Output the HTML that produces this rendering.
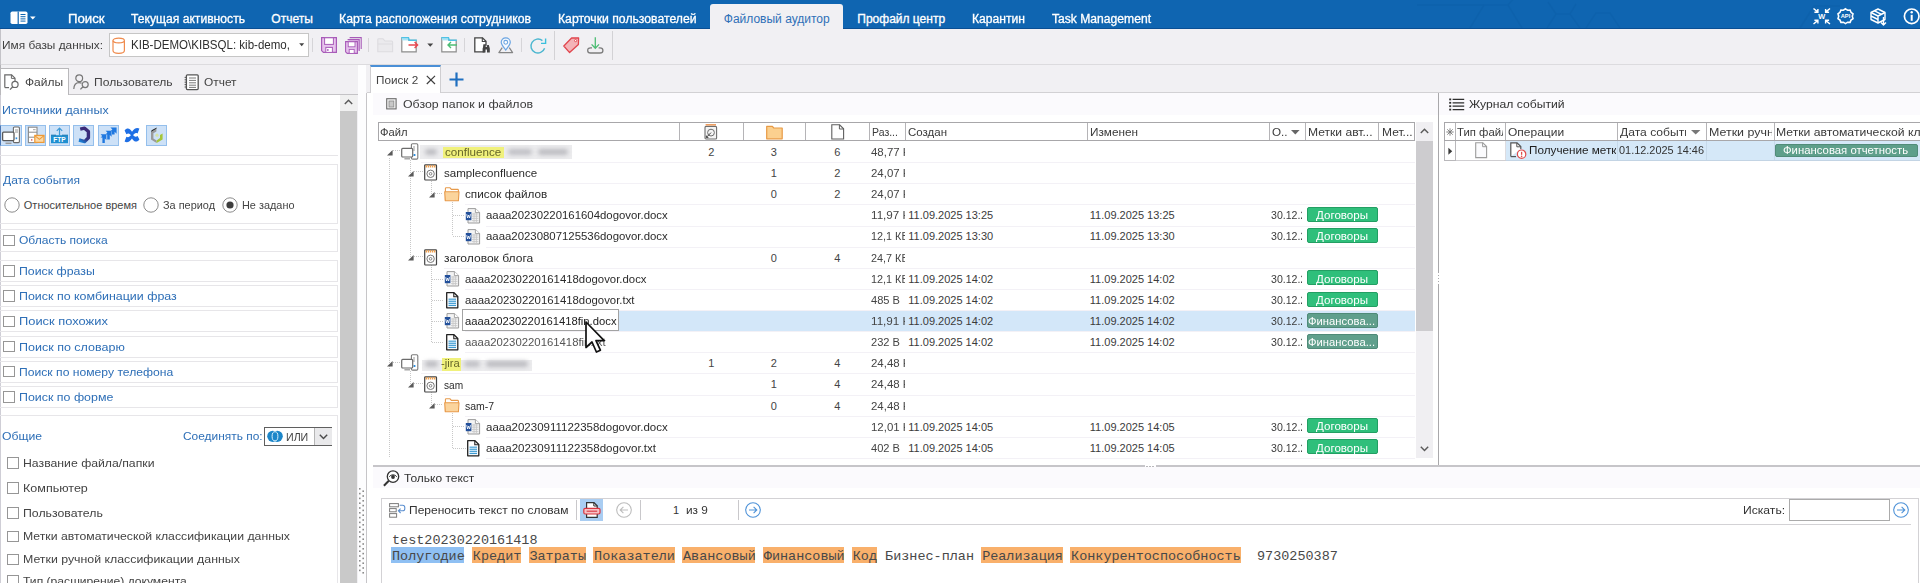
<!DOCTYPE html>
<html lang="ru"><head><meta charset="utf-8"><title>File Auditor</title><style>
html,body{margin:0;padding:0;}
body{width:1920px;height:583px;overflow:hidden;background:#f1f0f3;font-family:"Liberation Sans",sans-serif;position:relative;}
.a{position:absolute;}
.t{white-space:pre;transform-origin:0 0;}
svg{overflow:visible;}
</style></head>
<body>
<div class="a" style="left:0px;top:0px;width:1920px;height:28.5px;background:#0f65b1;"></div>
<svg class="a" style="left:1400px;top:0px;" width="520" height="28" viewBox="0 0 520 28">
<g fill="none" stroke="#0b5da6" stroke-width="1.6" opacity="0.4">
<path d="M70 28 L84 5 L108 5 L122 28"/><path d="M17 5 H84"/><path d="M108 5 L116 -4"/>
<path d="M147 28 L156 14 L170 14 L180 28"/><path d="M156 14 L148 2 M170 14 L176 4"/>
<path d="M186 28 L196 13 L210 13 L220 28"/>
<path d="M400 28 L414 6 L440 6"/>
</g></svg>
<div class="a" style="left:0px;top:27.7px;width:1920px;height:0.9px;background:#0a4f94;"></div>
<div class="a" style="left:0px;top:28.5px;width:1920px;height:0.9px;background:#d4e6f6;"></div>
<div class="a" style="left:710px;top:4px;width:133px;height:26px;background:#f1f0f3;border-radius:3px 3px 0 0;"></div>
<svg class="a" style="left:10px;top:11px;" width="26" height="14" viewBox="0 0 26 14">
<rect x="0.5" y="0.5" width="17" height="12.5" rx="1.8" fill="#fff"/>
<rect x="7.6" y="0.5" width="1.2" height="12.5" fill="#0f65b1"/>
<g stroke="#0f65b1" stroke-width="1"><path d="M10.5 3.5H15.5M10.5 5.7H15.5M10.5 7.9H15.5M10.5 10.1H15.5"/></g>
<path d="M20 5.5 L25.6 5.5 L22.8 8.6 Z" fill="#fff"/>
</svg>
<span class="a t" style="transform:scaleX(1.1002);left:68.3px;top:11.16px;font-size:12px;color:#ffffff;line-height:16px;-webkit-text-stroke:0.3px #fff;">Поиск</span>
<span class="a t" style="transform:scaleX(1.0109);left:130.8px;top:11.16px;font-size:12px;color:#ffffff;line-height:16px;-webkit-text-stroke:0.3px #fff;">Текущая активность</span>
<span class="a t" style="left:271.3px;top:11.16px;font-size:12px;color:#ffffff;line-height:16px;-webkit-text-stroke:0.3px #fff;">Отчеты</span>
<span class="a t" style="transform:scaleX(1.0204);left:339.3px;top:11.16px;font-size:12px;color:#ffffff;line-height:16px;-webkit-text-stroke:0.3px #fff;">Карта расположения сотрудников</span>
<span class="a t" style="transform:scaleX(1.0165);left:558.3px;top:11.16px;font-size:12px;color:#ffffff;line-height:16px;-webkit-text-stroke:0.3px #fff;">Карточки пользователей</span>
<span class="a t" style="left:857.3px;top:11.16px;font-size:12px;color:#ffffff;line-height:16px;-webkit-text-stroke:0.3px #fff;">Профайл центр</span>
<span class="a t" style="transform:scaleX(1.0103);left:972.3px;top:11.16px;font-size:12px;color:#ffffff;line-height:16px;-webkit-text-stroke:0.3px #fff;">Карантин</span>
<span class="a t" style="transform:scaleX(1.0097);left:1052.3px;top:11.16px;font-size:12px;color:#ffffff;line-height:16px;-webkit-text-stroke:0.3px #fff;">Task Management</span>
<span class="a t" style="left:723.8px;top:11.16px;font-size:12px;color:#2e6fb7;line-height:16px;">Файловый аудитор</span>
<svg class="a" style="left:1812.8px;top:8px;" width="18" height="17" viewBox="0 0 18 17">
<g stroke="#fff" stroke-width="1.4" fill="none">
<path d="M0.5 0.5 L4.6 3.9 M4.9 0.9 V4.2 H1.4"/><path d="M17 0.5 L12.9 3.9 M12.6 0.9 V4.2 H16.1"/>
<path d="M0.5 16 L4.6 12.6 M4.9 15.6 V12.3 H1.4"/><path d="M17 16 L12.9 12.6 M12.6 15.6 V12.3 H16.1"/>
</g>
<text x="8.75" y="11" font-size="7.4" font-weight="700" fill="#fff" text-anchor="middle" font-family="Liberation Sans, sans-serif">W</text>
</svg>
<svg class="a" style="left:1837px;top:8px;" width="17" height="17" viewBox="0 0 17 17">
<path d="M8.5 0.8 L10.6 2.2 L13.1 2 L14 4.3 L16 5.8 L15.3 8.2 L16 10.6 L14 12.1 L13.1 14.4 L10.6 14.2 L8.5 15.6 L6.4 14.2 L3.9 14.4 L3 12.1 L1 10.6 L1.7 8.2 L1 5.8 L3 4.3 L3.9 2 L6.4 2.2 Z" fill="none" stroke="#fff" stroke-width="1.6"/>
<text x="8.5" y="10.4" font-size="5.8" font-weight="700" fill="#fff" text-anchor="middle" font-family="Liberation Sans, sans-serif">API</text>
</svg>
<svg class="a" style="left:1870px;top:8px;" width="18" height="18" viewBox="0 0 18 18">
<g fill="none" stroke="#fff" stroke-width="1.4" stroke-linejoin="round">
<path d="M1 4.5 L8 1 L15 4.5 L15 11.5 L8 15 L1 11.5 Z"/><path d="M1 4.5 L8 8 L15 4.5 M8 8 V15"/>
<path d="M4.5 2.8 L11.5 6.3 M1 8 L8 11.5"/>
<path d="M13.5 9 V17 M11 14.5 L13.5 17 L16 14.5"/>
</g></svg>
<svg class="a" style="left:1903px;top:8px;" width="17" height="17" viewBox="0 0 17 17">
<circle cx="8.7" cy="8.3" r="7.3" fill="none" stroke="#fff" stroke-width="1.7"/>
<rect x="7.7" y="6.8" width="2" height="6" fill="#fff"/><circle cx="8.7" cy="4.3" r="1.2" fill="#fff"/></svg>
<div class="a" style="left:0px;top:28.5px;width:1920px;height:35.5px;background:#f1f0f3;"></div>
<div class="a" style="left:0px;top:64px;width:1920px;height:1px;background:#dcdbde;"></div>
<span class="a t" style="transform:scaleX(1.0789);left:2.3px;top:37.16px;font-size:11px;color:#3f3f3f;line-height:16px;">Имя базы данных:</span>
<div class="a" style="left:0px;top:29px;width:1px;height:36px;background:#c4c3c8;"></div>
<div class="a" style="left:109px;top:33px;width:200px;height:24px;background:#fff;border:1px solid #c6c6c6;box-sizing:border-box;"></div>
<svg class="a" style="left:112px;top:37px;" width="14" height="18" viewBox="0 0 14 18">
<path d="M1 3.5 V13.5 C1 15.2 3.6 16.3 6.7 16.3 C9.8 16.3 12.4 15.2 12.4 13.5 V3.5" fill="#fff" stroke="#ef8b4e" stroke-width="1.2"/>
<ellipse cx="6.7" cy="3.5" rx="5.7" ry="2.4" fill="#fff" stroke="#ef8b4e" stroke-width="1.2"/></svg>
<span class="a t" style="transform:scaleX(0.9611);left:131.3px;top:37.16px;font-size:12px;color:#2e2e2e;line-height:16px;">KIB-DEMO\KIBSQL: kib-demo,</span>
<svg class="a" style="left:298.5px;top:43.2px;" width="6" height="4" viewBox="0 0 6 4"><path d="M0.2 0.2 H5.2 L2.7 3.2 Z" fill="#444"/></svg>
<div class="a" style="left:312px;top:38px;width:1px;height:14px;background:#d6d5d8;"></div>
<div class="a" style="left:368px;top:38px;width:1px;height:14px;background:#d6d5d8;"></div>
<div class="a" style="left:464px;top:38px;width:1px;height:14px;background:#d6d5d8;"></div>
<div class="a" style="left:521px;top:38px;width:1px;height:14px;background:#d6d5d8;"></div>
<div class="a" style="left:554px;top:31px;width:1px;height:29px;background:#d3d2d5;"></div>
<div class="a" style="left:612px;top:31px;width:1px;height:29px;background:#d3d2d5;"></div>
<svg class="a" style="left:321px;top:37px;" width="16" height="16" viewBox="0 0 16 16">
<path d="M0.6 0.6 H15.4 V15.4 H2.4 L0.6 13.6 Z" fill="#e6c3ec" stroke="#a85bb8" stroke-width="1.2"/>
<rect x="3.6" y="0.8" width="8.8" height="6.6" fill="#fff" stroke="#a85bb8" stroke-width="1"/>
<rect x="4.8" y="10.4" width="6.6" height="5" fill="#fff" stroke="#a85bb8" stroke-width="1"/>
<rect x="6.2" y="12" width="1.3" height="2" fill="#a85bb8"/></svg>
<svg class="a" style="left:345px;top:36.5px;" width="17" height="17" viewBox="0 0 17 17">
<path d="M4.6 0.6 H16.2 V12" fill="none" stroke="#a85bb8" stroke-width="1.1"/>
<path d="M2.6 2.6 H14.2 V14" fill="#e6c3ec" stroke="#a85bb8" stroke-width="1.1"/>
<path d="M0.6 4.6 H12.4 V16.4 H2.2 L0.6 14.8 Z" fill="#e6c3ec" stroke="#a85bb8" stroke-width="1.1"/>
<rect x="3.2" y="4.8" width="6.8" height="5" fill="#fff" stroke="#a85bb8" stroke-width="0.9"/>
<rect x="4.2" y="12.4" width="5" height="4" fill="#fff" stroke="#a85bb8" stroke-width="0.9"/></svg>
<svg class="a" style="left:377px;top:38px;" width="17" height="15" viewBox="0 0 17 15">
<path d="M0.8 13.8 V1.6 Q0.8 0.8 1.6 0.8 H6 L8 3 H14.6 Q15.6 3 15.6 4 V13.8 Z" fill="#ebeaed" stroke="#dddce0" stroke-width="1.1"/>
<path d="M0.8 6 H15.6" stroke="#dddce0"/></svg>
<svg class="a" style="left:400.5px;top:37px;" width="18" height="16" viewBox="0 0 18 16">
<path d="M0.8 3 V14.8 H15.2 V3.4 H8 L7 1 H0.8 Z" fill="#fff" stroke="#8c8c8c" stroke-width="1.2"/>
<path d="M0.3 0.9 H7.4 L8.2 3.2 H15.8" fill="none" stroke="#4fc3e6" stroke-width="1.6"/>
<rect x="0.9" y="1.2" width="6.2" height="2.2" fill="#a8e3f5"/><path d="M7.5 8 H16.5 M13.6 5 L16.6 8 L13.6 11" fill="none" stroke="#e8474f" stroke-width="1.4"/></svg>
<svg class="a" style="left:427px;top:43px;" width="7" height="5" viewBox="0 0 7 5"><path d="M0.3 0.4 H6.2 L3.25 3.8 Z" fill="#444"/></svg>
<svg class="a" style="left:440.5px;top:37px;" width="18" height="16" viewBox="0 0 18 16">
<path d="M0.8 3 V14.8 H15.2 V3.4 H8 L7 1 H0.8 Z" fill="#fff" stroke="#8c8c8c" stroke-width="1.2"/>
<path d="M0.3 0.9 H7.4 L8.2 3.2 H15.8" fill="none" stroke="#4fc3e6" stroke-width="1.6"/>
<rect x="0.9" y="1.2" width="6.2" height="2.2" fill="#a8e3f5"/><path d="M16 8 H7 M10 5 L7 8 L10 11" fill="none" stroke="#4dbd74" stroke-width="1.4"/></svg>
<svg class="a" style="left:473.5px;top:37px;" width="16" height="16" viewBox="0 0 16 16">
<path d="M0.8 0.8 H8.5 L12 4.3 V8 H10 V14.8 H0.8 Z" fill="#fff" stroke="#444" stroke-width="1.3"/>
<path d="M8.3 0.8 V4.5 H12" fill="none" stroke="#444" stroke-width="1.1"/>
<path d="M8.6 15.4 V11.5 L9.8 8 H11.4 L11.8 10 H12.8 L13.2 8 H14.8 L15.8 11.5 V15.4 H13 V12.6 H11.5 V15.4 Z" fill="#444"/></svg>
<svg class="a" style="left:498px;top:37px;" width="16" height="17" viewBox="0 0 16 17">
<path d="M4.2 10.6 L0.9 15.6 H14.6 L11.3 10.6" fill="none" stroke="#858585" stroke-width="1.2" stroke-linejoin="round"/>
<path d="M7.75 13 C5 9.6 3.2 7.6 3.2 5.3 C3.2 2.7 5.2 0.8 7.75 0.8 C10.3 0.8 12.3 2.7 12.3 5.3 C12.3 7.6 10.5 9.6 7.75 13 Z" fill="#f4f8fd" stroke="#6ba5e2" stroke-width="1.2"/>
<circle cx="7.75" cy="5.3" r="1.9" fill="#fff" stroke="#6ba5e2" stroke-width="1.1"/></svg>
<svg class="a" style="left:529.5px;top:36.5px;" width="17" height="18" viewBox="0 0 17 18">
<path d="M14.6 11.2 A7 7 0 1 1 12.4 3.6" fill="none" stroke="#4bb6cf" stroke-width="1.4"/>
<path d="M11 6.4 H15.6 V1.4" fill="none" stroke="#3bc0dd" stroke-width="1.4"/></svg>
<svg class="a" style="left:563px;top:37px;" width="17" height="17" viewBox="0 0 17 17">
<path d="M8.6 1 L15.6 0.8 L15.4 7.6 L6.6 15.6 L0.8 9 Z" fill="#f4b3b7" stroke="#e0454d" stroke-width="1.3" stroke-linejoin="round"/>
<circle cx="12.6" cy="3.6" r="1.1" fill="#fff" stroke="#e0454d" stroke-width="0.9"/></svg>
<svg class="a" style="left:586.5px;top:37px;" width="17" height="17" viewBox="0 0 17 17">
<path d="M5 10.8 H3.6 Q0.7 10.8 0.7 13.4 Q0.7 16 3.6 16 H13 Q15.9 16 15.9 13.4 Q15.9 10.8 13 10.8 H11.6" fill="none" stroke="#7c7c7c" stroke-width="1.3"/>
<path d="M8.3 0.3 V11 M4.6 7.4 L8.3 11.2 L12 7.4" fill="none" stroke="#4dbd74" stroke-width="1.3"/></svg>
<div class="a" style="left:0px;top:95px;width:340px;height:488px;background:#fff;"></div>
<div class="a" style="left:0px;top:65px;width:1px;height:30px;background:#b4b3b6;"></div>
<div class="a" style="left:0px;top:95px;width:1px;height:488px;background:#cfced6;"></div>
<div class="a" style="left:0px;top:94px;width:358px;height:1px;background:#c4c3c6;"></div>
<div class="a" style="left:0px;top:68px;width:69px;height:27px;background:#fff;border:1px solid #b9b8bb;box-sizing:border-box;border-bottom:none;"></div>
<svg class="a" style="left:4px;top:74px;" width="16" height="16" viewBox="0 0 16 16">
<path d="M0.8 13.6 V0.8 H7.6 L11 4.2 V7" fill="none" stroke="#6a6a6a" stroke-width="1.2"/>
<path d="M7.4 0.8 V4.4 H11" fill="none" stroke="#6a6a6a" stroke-width="1"/>
<path d="M0.8 13.6 H5" fill="none" stroke="#6a6a6a" stroke-width="1.2"/>
<circle cx="11" cy="10.4" r="3.1" fill="none" stroke="#6a6a6a" stroke-width="1.2"/>
<path d="M8.8 12.8 L6 15.6" stroke="#6a6a6a" stroke-width="1.3"/></svg>
<span class="a t" style="transform:scaleX(1.0897);left:24.8px;top:74.46px;font-size:11px;color:#444;line-height:16px;">Файлы</span>
<svg class="a" style="left:73px;top:74px;" width="17" height="16" viewBox="0 0 17 16">
<circle cx="6.2" cy="4.2" r="3.4" fill="none" stroke="#777" stroke-width="1.2"/>
<path d="M0.8 15 C1 10.6 3.2 8.6 6 8.6 C7.2 8.6 8 8.9 8.6 9.3" fill="none" stroke="#777" stroke-width="1.2"/>
<circle cx="12.2" cy="10.6" r="3" fill="none" stroke="#777" stroke-width="1.2"/>
<path d="M10 12.8 L7.4 15.4" stroke="#777" stroke-width="1.3"/></svg>
<span class="a t" style="transform:scaleX(1.1010);left:93.8px;top:74.46px;font-size:11px;color:#444;line-height:16px;">Пользователь</span>
<svg class="a" style="left:184px;top:74px;" width="16" height="17" viewBox="0 0 16 17">
<rect x="2.4" y="0.8" width="11.8" height="14.8" rx="1" fill="#fff" stroke="#555" stroke-width="1.3"/>
<g stroke="#7a7a7a" stroke-width="1"><path d="M5 4H12M5 6.4H12M5 8.8H12M5 11.2H12M5 13.4H12"/></g>
<g stroke="#555" stroke-width="1"><path d="M0.6 3.4H3M0.6 5.8H3M0.6 8.2H3M0.6 10.6H3M0.6 13H3"/></g></svg>
<span class="a t" style="transform:scaleX(1.0815);left:203.8px;top:74.46px;font-size:11px;color:#444;line-height:16px;">Отчет</span>
<div class="a" style="left:339.6px;top:95px;width:17.8px;height:488px;background:#f0f0f0;"></div>
<div class="a" style="left:339.6px;top:111px;width:17.8px;height:472px;background:#c9c9c9;"></div>
<svg class="a" style="left:344px;top:99px;" width="9" height="6" viewBox="0 0 9 6"><path d="M0.8 5 L4.5 1.2 L8.2 5" fill="none" stroke="#5a5a5a" stroke-width="1.4"/></svg>
<div class="a" style="left:357.5px;top:65px;width:8.5px;height:518px;background:#fdfdfe;"></div>
<div class="a" style="left:366px;top:93px;width:1px;height:490px;background:#c6c5c8;"></div>
<div class="a" style="left:367px;top:93px;width:6px;height:490px;background:#fff;"></div>
<svg class="a" style="left:358.8px;top:488px;" width="6" height="88" viewBox="0 0 6 88"><rect x="0" y="0.0" width="1.6" height="1.6" fill="#8b8b8b"/><rect x="3.4" y="2.4" width="1.6" height="1.6" fill="#8b8b8b"/><rect x="0" y="4.8" width="1.6" height="1.6" fill="#8b8b8b"/><rect x="3.4" y="7.2" width="1.6" height="1.6" fill="#8b8b8b"/><rect x="0" y="9.6" width="1.6" height="1.6" fill="#8b8b8b"/><rect x="3.4" y="12.0" width="1.6" height="1.6" fill="#8b8b8b"/><rect x="0" y="14.4" width="1.6" height="1.6" fill="#8b8b8b"/><rect x="3.4" y="16.8" width="1.6" height="1.6" fill="#8b8b8b"/><rect x="0" y="19.2" width="1.6" height="1.6" fill="#8b8b8b"/><rect x="3.4" y="21.6" width="1.6" height="1.6" fill="#8b8b8b"/><rect x="0" y="24.0" width="1.6" height="1.6" fill="#8b8b8b"/><rect x="3.4" y="26.4" width="1.6" height="1.6" fill="#8b8b8b"/><rect x="0" y="28.8" width="1.6" height="1.6" fill="#8b8b8b"/><rect x="3.4" y="31.2" width="1.6" height="1.6" fill="#8b8b8b"/><rect x="0" y="33.6" width="1.6" height="1.6" fill="#8b8b8b"/><rect x="3.4" y="36.0" width="1.6" height="1.6" fill="#8b8b8b"/><rect x="0" y="38.4" width="1.6" height="1.6" fill="#8b8b8b"/><rect x="3.4" y="40.8" width="1.6" height="1.6" fill="#8b8b8b"/><rect x="0" y="43.2" width="1.6" height="1.6" fill="#8b8b8b"/><rect x="3.4" y="45.6" width="1.6" height="1.6" fill="#8b8b8b"/><rect x="0" y="48.0" width="1.6" height="1.6" fill="#8b8b8b"/><rect x="3.4" y="50.4" width="1.6" height="1.6" fill="#8b8b8b"/><rect x="0" y="52.8" width="1.6" height="1.6" fill="#8b8b8b"/><rect x="3.4" y="55.2" width="1.6" height="1.6" fill="#8b8b8b"/><rect x="0" y="57.6" width="1.6" height="1.6" fill="#8b8b8b"/><rect x="3.4" y="60.0" width="1.6" height="1.6" fill="#8b8b8b"/><rect x="0" y="62.4" width="1.6" height="1.6" fill="#8b8b8b"/><rect x="3.4" y="64.8" width="1.6" height="1.6" fill="#8b8b8b"/><rect x="0" y="67.2" width="1.6" height="1.6" fill="#8b8b8b"/><rect x="3.4" y="69.6" width="1.6" height="1.6" fill="#8b8b8b"/><rect x="0" y="72.0" width="1.6" height="1.6" fill="#8b8b8b"/><rect x="3.4" y="74.4" width="1.6" height="1.6" fill="#8b8b8b"/><rect x="0" y="76.8" width="1.6" height="1.6" fill="#8b8b8b"/><rect x="3.4" y="79.2" width="1.6" height="1.6" fill="#8b8b8b"/><rect x="0" y="81.6" width="1.6" height="1.6" fill="#8b8b8b"/><rect x="3.4" y="84.0" width="1.6" height="1.6" fill="#8b8b8b"/></svg>
<span class="a t" style="transform:scaleX(1.1312);left:1.8px;top:102.46px;font-size:11px;color:#2e6fb7;line-height:16px;">Источники данных</span>
<div class="a" style="left:0px;top:125px;width:22px;height:21px;background:#cde1f7;border:1px solid #94bfec;box-sizing:border-box;border-left:1.5px solid #4d77b3;"></div>
<svg class="a" style="left:1px;top:126px;" width="20" height="19" viewBox="0 0 20 19">
<rect x="12.4" y="1" width="6" height="15.6" rx="1" fill="#fff" stroke="#6a6a6a" stroke-width="1.1"/>
<path d="M14 4H17M14 6H17" stroke="#888" stroke-width="0.9"/><rect x="14.6" y="11.4" width="1.6" height="1.8" fill="#2c8fe0"/>
<rect x="1.6" y="6.2" width="11.4" height="8.4" rx="1" fill="#fff" stroke="#5a5a5a" stroke-width="1.3"/>
<path d="M4.5 17.3 H10.5" stroke="#9a9a9a" stroke-width="1.5"/></svg>
<div class="a" style="left:25px;top:125px;width:21px;height:21px;background:#cde1f7;border:1px solid #94bfec;box-sizing:border-box;"></div>
<svg class="a" style="left:26px;top:126px;" width="20" height="19" viewBox="0 0 20 19">
<rect x="2.4" y="1.2" width="8.6" height="15.4" fill="#fff" stroke="#8a8a8a" stroke-width="1.1"/>
<path d="M2.4 6.2H11M2.4 11.2H11" stroke="#8a8a8a" stroke-width="1"/><path d="M7 3.7H9.6" stroke="#999" stroke-width="0.9"/><rect x="5" y="13.2" width="1.4" height="1.4" fill="#d9534f"/>
<rect x="8.8" y="9.4" width="9.2" height="7" fill="#fbd9a6" stroke="#ee9a36" stroke-width="1.2"/>
<path d="M8.8 9.6 L13.4 13.4 L18 9.6" fill="none" stroke="#ee9a36" stroke-width="1.1"/></svg>
<div class="a" style="left:49px;top:125px;width:21px;height:21px;background:#cde1f7;border:1px solid #94bfec;box-sizing:border-box;"></div>
<svg class="a" style="left:50px;top:126px;" width="20" height="19" viewBox="0 0 20 19">
<rect x="1" y="9.2" width="17" height="8" fill="#1f8fd0"/>
<path d="M1 9.2 H6 M12 9.2 H18" stroke="#1a79b3" stroke-width="1"/>
<path d="M9.5 9.5 V2.4 M6.8 4.8 L9.5 2 L12.2 4.8" fill="none" stroke="#3f9ad6" stroke-width="1.2"/>
<text x="9.5" y="16" font-size="6.6" font-weight="700" fill="#fff" text-anchor="middle" font-family="Liberation Sans, sans-serif">FTP</text></svg>
<div class="a" style="left:73px;top:125px;width:21px;height:21px;background:#cde1f7;border:1px solid #94bfec;box-sizing:border-box;"></div>
<svg class="a" style="left:74px;top:126px;" width="20" height="19" viewBox="0 0 20 19">
<defs><linearGradient id="gC" x1="0.7" y1="0" x2="0.2" y2="1"><stop offset="0" stop-color="#3b2a78"/><stop offset="0.6" stop-color="#33307f"/><stop offset="1" stop-color="#1b7fd4"/></linearGradient></defs>
<path d="M6.2 3.2 L10.6 2.2 L14.4 5.6 V11.8 L10.6 15.6 L5 14" fill="none" stroke="url(#gC)" stroke-width="3.4" stroke-linejoin="round"/></svg>
<div class="a" style="left:97.5px;top:125px;width:21px;height:21px;background:#cde1f7;border:1px solid #94bfec;box-sizing:border-box;"></div>
<svg class="a" style="left:98.5px;top:126px;" width="20" height="19" viewBox="0 0 20 19">
<g fill="#1f78e0">
<path d="M11.4 1.6 H17.6 V7.8 L15.6 5.8 L15.6 8.6 L13 8.6 L13 5.2 L11.4 5.2 L13.4 3.4 Z"/>
<path d="M6.6 4.8 H12.6 V10.8 L10.8 9 V13.4 H8.2 V8.4 H6.6 L8.4 6.6 Z"/>
<path d="M1.6 8.2 H7.4 V14 L5.8 12.4 V17 H3.4 V11.6 H1.6 L3.2 10 Z"/></g></svg>
<svg class="a" style="left:124px;top:127px;" width="16" height="17" viewBox="0 0 16 17">
<path d="M0.6 3.6 C3.6 -0.4 6.4 2.4 8 4.8 C10 2 12.4 0 15.4 1.6 L13.6 6.4 C11.6 5.2 10.2 6.4 8 9.4 C5.8 6.6 4.6 5.6 2.4 7.2 Z" fill="#1f6fe5"/>
<path d="M15.4 12.6 C12.4 16.6 9.6 13.8 8 11.4 C6 14.2 3.6 16.2 0.6 14.6 L2.4 9.8 C4.4 11 5.8 9.8 8 6.8 C10.2 9.6 11.4 10.6 13.6 9 Z" fill="#1f6fe5"/></svg>
<div class="a" style="left:146px;top:125px;width:21px;height:21px;background:#cde1f7;border:1px solid #94bfec;box-sizing:border-box;"></div>
<svg class="a" style="left:147px;top:126px;" width="20" height="19" viewBox="0 0 20 19">
<path d="M4 6 L9.4 2.8 L9.4 5.4 L6.4 7.2 V12.4 L9.6 14.4 V17 L4 13.6 Z" fill="#9a9a9a"/>
<path d="M4 6 L9.4 2.8 L9.8 1.6 L4.6 4.2 Z" fill="#222"/>
<path d="M9.6 17 L15.6 13.4 V7.4 L13 9 V12 L9.6 14.4 Z" fill="#a4c639"/>
<circle cx="10" cy="9.2" r="1.6" fill="#d7e3a5"/></svg>
<div class="a" style="left:0px;top:155px;width:338px;height:1px;background:#e6e5e8;"></div>
<div class="a" style="left:0px;top:164px;width:338px;height:60px;border:1px solid #e7e6e9;box-sizing:border-box;border-left:none;"></div>
<span class="a t" style="transform:scaleX(1.0933);left:3.3px;top:172.16px;font-size:11px;color:#2e6fb7;line-height:16px;">Дата события</span>
<svg class="a" style="left:3.8px;top:197px;" width="16" height="16" viewBox="0 0 16 16"><circle cx="8" cy="8" r="7.2" fill="#fff" stroke="#8c8c8c" stroke-width="1"/></svg>
<span class="a t" style="left:23.8px;top:197.16px;font-size:11px;color:#444;line-height:16px;">Относительное время</span>
<svg class="a" style="left:142.5px;top:197px;" width="16" height="16" viewBox="0 0 16 16"><circle cx="8" cy="8" r="7.2" fill="#fff" stroke="#8c8c8c" stroke-width="1"/></svg>
<span class="a t" style="transform:scaleX(0.9912);left:163.3px;top:197.16px;font-size:11px;color:#444;line-height:16px;">За период</span>
<svg class="a" style="left:221.5px;top:197px;" width="16" height="16" viewBox="0 0 16 16"><circle cx="8" cy="8" r="7.2" fill="#fff" stroke="#8c8c8c" stroke-width="1"/><circle cx="8" cy="8" r="3.6" fill="#3f3f3f"/></svg>
<span class="a t" style="transform:scaleX(0.9901);left:241.8px;top:197.16px;font-size:11px;color:#444;line-height:16px;">Не задано</span>
<div class="a" style="left:0px;top:229px;width:338px;height:23px;border:1px solid #e7e6e9;box-sizing:border-box;border-left:none;"></div>
<div class="a" style="left:2.8px;top:234.6px;width:11.8px;height:11.6px;background:#fff;border:1px solid #969696;box-sizing:border-box;"></div>
<span class="a t" style="transform:scaleX(1.0945);left:18.6px;top:232.46px;font-size:11px;color:#2e6fb7;line-height:16px;">Область поиска</span>
<div class="a" style="left:0px;top:260.0px;width:338px;height:22px;border:1px solid #e7e6e9;box-sizing:border-box;border-left:none;"></div>
<div class="a" style="left:2.8px;top:265.1px;width:11.8px;height:11.6px;background:#fff;border:1px solid #969696;box-sizing:border-box;"></div>
<span class="a t" style="transform:scaleX(1.1207);left:18.6px;top:262.96px;font-size:11px;color:#2e6fb7;line-height:16px;">Поиск фразы</span>
<div class="a" style="left:0px;top:285.2px;width:338px;height:22px;border:1px solid #e7e6e9;box-sizing:border-box;border-left:none;"></div>
<div class="a" style="left:2.8px;top:290.3px;width:11.8px;height:11.6px;background:#fff;border:1px solid #969696;box-sizing:border-box;"></div>
<span class="a t" style="transform:scaleX(1.1301);left:18.6px;top:288.16px;font-size:11px;color:#2e6fb7;line-height:16px;">Поиск по комбинации фраз</span>
<div class="a" style="left:0px;top:310.4px;width:338px;height:22px;border:1px solid #e7e6e9;box-sizing:border-box;border-left:none;"></div>
<div class="a" style="left:2.8px;top:315.5px;width:11.8px;height:11.6px;background:#fff;border:1px solid #969696;box-sizing:border-box;"></div>
<span class="a t" style="transform:scaleX(1.1713);left:18.6px;top:313.36px;font-size:11px;color:#2e6fb7;line-height:16px;">Поиск похожих</span>
<div class="a" style="left:0px;top:335.6px;width:338px;height:22px;border:1px solid #e7e6e9;box-sizing:border-box;border-left:none;"></div>
<div class="a" style="left:2.8px;top:340.70000000000005px;width:11.8px;height:11.6px;background:#fff;border:1px solid #969696;box-sizing:border-box;"></div>
<span class="a t" style="transform:scaleX(1.1375);left:18.6px;top:338.56px;font-size:11px;color:#2e6fb7;line-height:16px;">Поиск по словарю</span>
<div class="a" style="left:0px;top:360.8px;width:338px;height:22px;border:1px solid #e7e6e9;box-sizing:border-box;border-left:none;"></div>
<div class="a" style="left:2.8px;top:365.90000000000003px;width:11.8px;height:11.6px;background:#fff;border:1px solid #969696;box-sizing:border-box;"></div>
<span class="a t" style="transform:scaleX(1.1049);left:18.6px;top:363.76px;font-size:11px;color:#2e6fb7;line-height:16px;">Поиск по номеру телефона</span>
<div class="a" style="left:0px;top:386.0px;width:338px;height:22px;border:1px solid #e7e6e9;box-sizing:border-box;border-left:none;"></div>
<div class="a" style="left:2.8px;top:391.1px;width:11.8px;height:11.6px;background:#fff;border:1px solid #969696;box-sizing:border-box;"></div>
<span class="a t" style="transform:scaleX(1.1278);left:18.6px;top:388.96px;font-size:11px;color:#2e6fb7;line-height:16px;">Поиск по форме</span>
<div class="a" style="left:0px;top:415px;width:338px;height:180px;border:1px solid #e7e6e9;box-sizing:border-box;border-left:none;"></div>
<span class="a t" style="transform:scaleX(1.1088);left:2.3px;top:428.46px;font-size:11px;color:#2e6fb7;line-height:16px;">Общие</span>
<span class="a t" style="transform:scaleX(1.0828);left:182.8px;top:428.46px;font-size:11px;color:#2e6fb7;line-height:16px;">Соединять по:</span>
<div class="a" style="left:264px;top:427px;width:68px;height:19px;background:#fff;border:1px solid #5f5f5f;box-sizing:border-box;"></div>
<div class="a" style="left:314px;top:428px;width:17px;height:17px;background:#e9e9eb;border-left:1px solid #b5b5b5;"></div>
<svg class="a" style="left:318.5px;top:433.5px;" width="9" height="6" viewBox="0 0 9 6"><path d="M0.8 0.8 L4.5 4.6 L8.2 0.8" fill="none" stroke="#4a4a4a" stroke-width="1.4"/></svg>
<svg class="a" style="left:267px;top:430px;" width="16" height="13" viewBox="0 0 16 13">
<circle cx="5.8" cy="6.3" r="5.6" fill="#1c86c9"/><circle cx="10.2" cy="6.3" r="5.6" fill="#1c86c9"/>
<ellipse cx="8" cy="6.3" rx="2.9" ry="4.6" fill="none" stroke="#d9f0fb" stroke-width="1"/></svg>
<span class="a t" style="transform:scaleX(0.9668);left:286.0px;top:428.96px;font-size:11px;color:#444;line-height:16px;">ИЛИ</span>
<div class="a" style="left:7.1px;top:457.20000000000005px;width:11.8px;height:11.6px;background:#fff;border:1px solid #969696;box-sizing:border-box;"></div>
<span class="a t" style="transform:scaleX(1.1135);left:22.6px;top:454.96px;font-size:11px;color:#444;line-height:16px;">Название файла/папки</span>
<div class="a" style="left:7.1px;top:482.40000000000003px;width:11.8px;height:11.6px;background:#fff;border:1px solid #969696;box-sizing:border-box;"></div>
<span class="a t" style="transform:scaleX(1.1388);left:22.6px;top:480.16px;font-size:11px;color:#444;line-height:16px;">Компьютер</span>
<div class="a" style="left:7.1px;top:507.4px;width:11.8px;height:11.6px;background:#fff;border:1px solid #969696;box-sizing:border-box;"></div>
<span class="a t" style="transform:scaleX(1.1180);left:22.6px;top:505.16px;font-size:11px;color:#444;line-height:16px;">Пользователь</span>
<div class="a" style="left:7.1px;top:530.6999999999999px;width:11.8px;height:11.6px;background:#fff;border:1px solid #969696;box-sizing:border-box;"></div>
<span class="a t" style="transform:scaleX(1.1127);left:22.6px;top:528.46px;font-size:11px;color:#444;line-height:16px;">Метки автоматической классификации данных</span>
<div class="a" style="left:7.1px;top:553.6999999999999px;width:11.8px;height:11.6px;background:#fff;border:1px solid #969696;box-sizing:border-box;"></div>
<span class="a t" style="transform:scaleX(1.1209);left:22.6px;top:551.46px;font-size:11px;color:#444;line-height:16px;">Метки ручной классификации данных</span>
<div class="a" style="left:7.1px;top:574.9px;width:11.8px;height:11.6px;background:#fff;border:1px solid #969696;box-sizing:border-box;"></div>
<span class="a t" style="transform:scaleX(1.1015);left:22.6px;top:572.66px;font-size:11px;color:#444;line-height:16px;">Тип (расширение) документа</span>
<div class="a" style="left:367px;top:92px;width:1553px;height:1px;background:#d2d1d4;"></div>
<div class="a" style="left:367px;top:93px;width:1071px;height:373px;background:#fff;"></div>
<div class="a" style="left:370px;top:65px;width:71px;height:28px;background:#fff;border:1px solid #cfced1;box-sizing:border-box;border-bottom:none;border-top:2px solid #4a8fd6;"></div>
<span class="a t" style="transform:scaleX(1.0658);left:376.1px;top:71.66px;font-size:11px;color:#444;line-height:16px;">Поиск 2</span>
<svg class="a" style="left:426px;top:75px;" width="10" height="10" viewBox="0 0 10 10"><path d="M0.8 0.8 L9 9 M9 0.8 L0.8 9" stroke="#3f3f3f" stroke-width="1.2" fill="none"/></svg>
<svg class="a" style="left:449px;top:72px;" width="15" height="15" viewBox="0 0 15 15"><path d="M7.5 0.5 V14.5 M0.5 7.5 H14.5" stroke="#1f6fc0" stroke-width="2.2" fill="none"/></svg>
<div class="a" style="left:373px;top:93px;width:1065px;height:22px;background:#fbfafd;"></div>
<svg class="a" style="left:386px;top:98px;" width="11" height="12" viewBox="0 0 11 12">
<rect x="0.7" y="0.7" width="9.4" height="10.2" fill="#f2f2f2" stroke="#6c6c6c" stroke-width="1.1"/>
<rect x="3" y="3" width="4.8" height="6" fill="#c8c8c8" stroke="#8a8a8a" stroke-width="0.8"/></svg>
<span class="a t" style="transform:scaleX(1.1230);left:402.6px;top:96.16px;font-size:11px;color:#3b3b3b;line-height:16px;">Обзор папок и файлов</span>
<div class="a" style="left:378px;top:122px;width:1037px;height:19px;background:#fff;border:1px solid #a8a7aa;box-sizing:border-box;"></div>
<div class="a" style="left:679px;top:123px;width:1px;height:17px;background:#b5b4b7;"></div>
<div class="a" style="left:743px;top:123px;width:1px;height:17px;background:#b5b4b7;"></div>
<div class="a" style="left:805px;top:123px;width:1px;height:17px;background:#b5b4b7;"></div>
<div class="a" style="left:869px;top:123px;width:1px;height:17px;background:#b5b4b7;"></div>
<div class="a" style="left:905px;top:123px;width:1px;height:17px;background:#b5b4b7;"></div>
<div class="a" style="left:1087px;top:123px;width:1px;height:17px;background:#b5b4b7;"></div>
<div class="a" style="left:1269px;top:123px;width:1px;height:17px;background:#b5b4b7;"></div>
<div class="a" style="left:1305px;top:123px;width:1px;height:17px;background:#b5b4b7;"></div>
<div class="a" style="left:1378px;top:123px;width:1px;height:17px;background:#b5b4b7;"></div>
<span class="a t" style="transform:scaleX(1.0174);left:380.3px;top:124.16px;font-size:11px;color:#3a3a3a;line-height:16px;">Файл</span>
<span class="a t" style="transform:scaleX(0.9547);left:872.3px;top:124.16px;font-size:11px;color:#3a3a3a;line-height:16px;">Раз...</span>
<span class="a t" style="transform:scaleX(1.0451);left:908.3px;top:124.16px;font-size:11px;color:#3a3a3a;line-height:16px;">Создан</span>
<span class="a t" style="transform:scaleX(1.0705);left:1090.3px;top:124.16px;font-size:11px;color:#3a3a3a;line-height:16px;">Изменен</span>
<span class="a t" style="transform:scaleX(1.0606);left:1272.3px;top:124.16px;font-size:11px;color:#3a3a3a;line-height:16px;">О..</span>
<svg class="a" style="left:1290.5px;top:130px;" width="9" height="5" viewBox="0 0 9 5"><path d="M0 0 H8.6 L4.3 4.4 Z" fill="#666"/></svg>
<span class="a t" style="transform:scaleX(1.0984);left:1308.3px;top:124.16px;font-size:11px;color:#3a3a3a;line-height:16px;">Метки авт...</span>
<span class="a t" style="transform:scaleX(1.0913);left:1382.3px;top:124.16px;font-size:11px;color:#3a3a3a;line-height:16px;">Мет...</span>
<svg class="a" style="left:704px;top:124px;" width="14" height="16" viewBox="0 0 14 16">
<rect x="1" y="2.4" width="11.6" height="12.6" rx="1" fill="#f4f4f4" stroke="#6e6e6e" stroke-width="1.1"/>
<path d="M1.6 0.8 H12" stroke="#ee9a5a" stroke-width="1.5"/>
<circle cx="7" cy="8.6" r="3.4" fill="none" stroke="#6e6e6e" stroke-width="1"/>
<path d="M7 8.6 L2.4 13.4 M2.4 11.6 V13.6 H4.4" fill="none" stroke="#444" stroke-width="1"/></svg>
<svg class="a" style="left:766px;top:125px;" width="18" height="15" viewBox="0 0 18 15">
<path d="M0.7 13.8 V1.4 H6.4 L7.8 3 H16.2 V13.8 Z" fill="#fbd08f" stroke="#e89a45" stroke-width="1.2" stroke-linejoin="round"/></svg>
<svg class="a" style="left:831px;top:124px;" width="14" height="16" viewBox="0 0 14 16">
<path d="M0.8 0.8 H8.6 L12.6 4.8 V15 H0.8 Z" fill="#fff" stroke="#5f5f5f" stroke-width="1.1"/>
<path d="M8.4 0.8 V5 H12.6" fill="none" stroke="#5f5f5f" stroke-width="1"/></svg>
<div class="a" style="left:1416px;top:122px;width:17px;height:336px;background:#f0eff2;"></div>
<div class="a" style="left:1416px;top:141px;width:17px;height:190px;background:#cdcccf;"></div>
<svg class="a" style="left:1420px;top:128px;" width="9" height="6" viewBox="0 0 9 6"><path d="M0.8 5 L4.5 1.2 L8.2 5" fill="none" stroke="#5a5a5a" stroke-width="1.4"/></svg>
<svg class="a" style="left:1420px;top:446px;" width="9" height="6" viewBox="0 0 9 6"><path d="M0.8 0.8 L4.5 4.6 L8.2 0.8" fill="none" stroke="#5a5a5a" stroke-width="1.4"/></svg>
<div class="a" style="left:1438px;top:93px;width:1px;height:373px;background:#a9a8ab;"></div>
<div class="a" style="left:1437.5px;top:272.7px;width:2px;height:11.6px;background:#fff;"></div>
<div class="a" style="left:1438px;top:274.6px;width:1px;height:1.4px;background:#a9a8ab;"></div>
<div class="a" style="left:1438px;top:277.8px;width:1px;height:1.4px;background:#a9a8ab;"></div>
<div class="a" style="left:1438px;top:281px;width:1px;height:1.4px;background:#a9a8ab;"></div>
<div class="a" style="left:421px;top:162px;width:994px;height:1px;background:#f3f1f6;"></div>
<div class="a" style="left:444px;top:183px;width:971px;height:1px;background:#f3f1f6;"></div>
<div class="a" style="left:465px;top:204px;width:950px;height:1px;background:#f3f1f6;"></div>
<div class="a" style="left:486px;top:226px;width:929px;height:1px;background:#f3f1f6;"></div>
<div class="a" style="left:486px;top:247px;width:929px;height:1px;background:#f3f1f6;"></div>
<div class="a" style="left:444px;top:268px;width:971px;height:1px;background:#f3f1f6;"></div>
<div class="a" style="left:465px;top:289px;width:950px;height:1px;background:#f3f1f6;"></div>
<div class="a" style="left:465px;top:310px;width:950px;height:1px;background:#f3f1f6;"></div>
<div class="a" style="left:465px;top:331px;width:950px;height:1px;background:#f3f1f6;"></div>
<div class="a" style="left:465px;top:352px;width:950px;height:1px;background:#f3f1f6;"></div>
<div class="a" style="left:421px;top:373px;width:994px;height:1px;background:#f3f1f6;"></div>
<div class="a" style="left:444px;top:395px;width:971px;height:1px;background:#f3f1f6;"></div>
<div class="a" style="left:465px;top:416px;width:950px;height:1px;background:#f3f1f6;"></div>
<div class="a" style="left:486px;top:437px;width:929px;height:1px;background:#f3f1f6;"></div>
<div class="a" style="left:486px;top:458px;width:929px;height:1px;background:#f3f1f6;"></div>
<div class="a" style="left:619px;top:311px;width:796px;height:20px;background:#d3e7f9;"></div>
<div class="a" style="left:462px;top:309px;width:157px;height:22px;background:#fff;border:1px solid #a3a3a3;box-sizing:border-box;"></div>
<div class="a" style="left:389px;top:158px;width:1px;height:300px;background:repeating-linear-gradient(to bottom,#c8c8c8 0,#c8c8c8 1px,transparent 1px,transparent 2px);"></div>
<div class="a" style="left:410px;top:160px;width:1px;height:97.44999999999999px;background:repeating-linear-gradient(to bottom,#c8c8c8 0,#c8c8c8 1px,transparent 1px,transparent 2px);"></div>
<div class="a" style="left:410px;top:371.1px;width:1px;height:13.129999999999995px;background:repeating-linear-gradient(to bottom,#c8c8c8 0,#c8c8c8 1px,transparent 1px,transparent 2px);"></div>
<div class="a" style="left:431px;top:180.93px;width:1px;height:13.129999999999995px;background:repeating-linear-gradient(to bottom,#c8c8c8 0,#c8c8c8 1px,transparent 1px,transparent 2px);"></div>
<div class="a" style="left:431px;top:265.45px;width:1px;height:76.52000000000004px;background:repeating-linear-gradient(to bottom,#c8c8c8 0,#c8c8c8 1px,transparent 1px,transparent 2px);"></div>
<div class="a" style="left:431px;top:392.23px;width:1px;height:13.129999999999995px;background:repeating-linear-gradient(to bottom,#c8c8c8 0,#c8c8c8 1px,transparent 1px,transparent 2px);"></div>
<div class="a" style="left:452px;top:202.06px;width:1px;height:34.25999999999999px;background:repeating-linear-gradient(to bottom,#c8c8c8 0,#c8c8c8 1px,transparent 1px,transparent 2px);"></div>
<div class="a" style="left:452px;top:413.36px;width:1px;height:34.25999999999999px;background:repeating-linear-gradient(to bottom,#c8c8c8 0,#c8c8c8 1px,transparent 1px,transparent 2px);"></div>
<svg class="a" style="left:387px;top:149.8px;" width="6" height="6" viewBox="0 0 6 6"><path d="M5.6 0 V5.6 H0 Z" fill="#5a5a5a"/></svg>
<div class="a" style="left:393px;top:150.3px;width:7px;height:1px;background:repeating-linear-gradient(to right,#c8c8c8 0,#c8c8c8 1px,transparent 1px,transparent 2px);"></div>
<svg class="a" style="left:401px;top:142.8px;" width="18" height="17" viewBox="0 0 18 17">
<rect x="10.4" y="0.7" width="6.4" height="15.4" rx="1.2" fill="#fff" stroke="#7b7b7b" stroke-width="1.1"/>
<path d="M13 3 V8" stroke="#9a9a9a" stroke-width="1"/><rect x="12.6" y="11" width="1.8" height="2" fill="#2c8fe0"/>
<rect x="0.7" y="5.4" width="11" height="8.6" rx="1" fill="#fff" stroke="#6b6b6b" stroke-width="1.2"/>
<path d="M3.4 15.8 H9" stroke="#9a9a9a" stroke-width="1.3"/></svg>
<div class="a" style="left:420px;top:145px;width:152px;height:13.6px;background:#ececee;filter:blur(0.6px);"></div>
<div class="a" style="left:443px;top:147px;width:61px;height:10.8px;background:#f0f17c;"></div>
<div class="a" style="left:425px;top:148.8px;width:12px;height:6px;background:#bcbcc1;filter:blur(2px);border-radius:3px;"></div>
<div class="a" style="left:508px;top:148.8px;width:24px;height:6px;background:#bfbfc4;filter:blur(2px);border-radius:3px;"></div>
<div class="a" style="left:538px;top:148.8px;width:30px;height:6px;background:#bcbcc1;filter:blur(2px);border-radius:3px;"></div>
<span class="a t" style="transform:scaleX(1.0571);left:445.1px;top:143.66px;font-size:11px;color:#66662a;line-height:16px;">confluence</span>
<span class="a t" style="left:708.3px;top:143.96px;font-size:11px;color:#444;line-height:16px;">2</span>
<span class="a t" style="left:770.8px;top:143.96px;font-size:11px;color:#444;line-height:16px;">3</span>
<span class="a t" style="left:834.3px;top:143.96px;font-size:11px;color:#444;line-height:16px;">6</span>
<div class="a" style="left:871.3px;top:143.96px;width:33.7px;height:16px;overflow:hidden;"><span class="a t" style="transform:scaleX(1.0412);left:0;top:0;font-size:11px;color:#444;line-height:16px;">48,77 КБ</span></div>
<svg class="a" style="left:408px;top:170.93px;" width="6" height="6" viewBox="0 0 6 6"><path d="M5.6 0 V5.6 H0 Z" fill="#5a5a5a"/></svg>
<div class="a" style="left:414px;top:171.43px;width:9px;height:1px;background:repeating-linear-gradient(to right,#c8c8c8 0,#c8c8c8 1px,transparent 1px,transparent 2px);"></div>
<svg class="a" style="left:424px;top:164.43px;" width="14" height="17" viewBox="0 0 14 17">
<rect x="0.7" y="0.8" width="11.8" height="15.2" rx="0.8" fill="#fff" stroke="#444" stroke-width="1.2"/>
<path d="M1.6 2.4 H11.6" stroke="#f0a04e" stroke-width="2.4" stroke-dasharray="1.4 0.7"/>
<circle cx="6.6" cy="9.8" r="3.7" fill="none" stroke="#777" stroke-width="1"/>
<circle cx="6.6" cy="9.8" r="1.3" fill="none" stroke="#777" stroke-width="0.9"/></svg>
<span class="a t" style="transform:scaleX(1.0516);left:444.1px;top:165.09px;font-size:11px;color:#2c2c2c;line-height:16px;">sampleconfluence</span>
<span class="a t" style="left:770.8px;top:165.09px;font-size:11px;color:#444;line-height:16px;">1</span>
<span class="a t" style="left:834.3px;top:165.09px;font-size:11px;color:#444;line-height:16px;">2</span>
<div class="a" style="left:871.3px;top:165.09px;width:33.7px;height:16px;overflow:hidden;"><span class="a t" style="transform:scaleX(1.0412);left:0;top:0;font-size:11px;color:#444;line-height:16px;">24,07 КБ</span></div>
<svg class="a" style="left:429px;top:192.06px;" width="6" height="6" viewBox="0 0 6 6"><path d="M5.6 0 V5.6 H0 Z" fill="#5a5a5a"/></svg>
<div class="a" style="left:435px;top:192.56px;width:8px;height:1px;background:repeating-linear-gradient(to right,#c8c8c8 0,#c8c8c8 1px,transparent 1px,transparent 2px);"></div>
<svg class="a" style="left:444px;top:187.06px;" width="16" height="15" viewBox="0 0 16 15">
<path d="M1.4 13.4 V1.6 Q1.4 0.8 2.2 0.8 H6 L7.4 2.4 H13.6 Q14.4 2.4 14.4 3.2 V5" fill="#fff" stroke="#e79a4b" stroke-width="1.1"/>
<path d="M0.7 4.8 H15 L14.4 13.8 H1.3 Z" fill="#fbd49c" stroke="#e79a4b" stroke-width="1.1" stroke-linejoin="round"/></svg>
<span class="a t" style="transform:scaleX(1.0680);left:465.1px;top:186.22px;font-size:11px;color:#2c2c2c;line-height:16px;">список файлов</span>
<span class="a t" style="left:770.8px;top:186.22px;font-size:11px;color:#444;line-height:16px;">0</span>
<span class="a t" style="left:834.3px;top:186.22px;font-size:11px;color:#444;line-height:16px;">2</span>
<div class="a" style="left:871.3px;top:186.22px;width:33.7px;height:16px;overflow:hidden;"><span class="a t" style="transform:scaleX(1.0412);left:0;top:0;font-size:11px;color:#444;line-height:16px;">24,07 КБ</span></div>
<div class="a" style="left:453px;top:215.19px;width:11px;height:1px;background:repeating-linear-gradient(to right,#c8c8c8 0,#c8c8c8 1px,transparent 1px,transparent 2px);"></div>
<svg class="a" style="left:465px;top:207.69px;" width="16" height="16" viewBox="0 0 16 16">
<path d="M3 0.6 H10.6 L14.6 4.4 V15 H3 Z" fill="#f3f3f3" stroke="#9b9b9b" stroke-width="1"/>
<path d="M10.4 0.6 V4.6 H14.6" fill="#fff" stroke="#9b9b9b" stroke-width="0.9"/>
<g stroke="#c4c4c4" stroke-width="0.8"><path d="M7 6 H13.4 M7 8.2 H13.4 M7 10.4 H13.4 M7 12.6 H13.4 M9 5 V14 M11.4 5 V14"/></g>
<rect x="0.8" y="4" width="5.6" height="8.2" fill="#23509a"/>
<path d="M1.7 6.2 L2.6 10 L3.6 7 L4.6 10 L5.5 6.2" fill="none" stroke="#fff" stroke-width="0.85"/></svg>
<span class="a t" style="transform:scaleX(1.0352);left:485.6px;top:207.35px;font-size:11px;color:#2c2c2c;line-height:16px;">aaaa20230220161604dogovor.docx</span>
<div class="a" style="left:871.3px;top:207.35px;width:33.7px;height:16px;overflow:hidden;"><span class="a t" style="transform:scaleX(1.0612);left:0;top:0;font-size:11px;color:#444;line-height:16px;">11,97 КБ</span></div>
<span class="a t" style="left:908.3px;top:207.35px;font-size:11px;color:#3b3b3b;line-height:16px;">11.09.2025 13:25</span>
<span class="a t" style="left:1089.8px;top:207.35px;font-size:11px;color:#3b3b3b;line-height:16px;">11.09.2025 13:25</span>
<div class="a" style="left:1271.3px;top:207.35px;width:30.7px;height:16px;overflow:hidden;"><span class="a t" style="transform:scaleX(0.9618);left:0;top:0;font-size:11px;color:#3b3b3b;line-height:16px;">30.12.2025</span></div>
<div class="a" style="left:1306.6px;top:206.99px;width:71.6px;height:15px;background:#2fbf7b;border:1px solid #239f63;box-sizing:border-box;border-radius:2px;"></div>
<span class="a t" style="transform:scaleX(1.0526);left:1315.8px;top:207.15px;font-size:11px;color:#fff;line-height:16px;">Договоры</span>
<div class="a" style="left:453px;top:236.32px;width:11px;height:1px;background:repeating-linear-gradient(to right,#c8c8c8 0,#c8c8c8 1px,transparent 1px,transparent 2px);"></div>
<svg class="a" style="left:465px;top:228.82px;" width="16" height="16" viewBox="0 0 16 16">
<path d="M3 0.6 H10.6 L14.6 4.4 V15 H3 Z" fill="#f3f3f3" stroke="#9b9b9b" stroke-width="1"/>
<path d="M10.4 0.6 V4.6 H14.6" fill="#fff" stroke="#9b9b9b" stroke-width="0.9"/>
<g stroke="#c4c4c4" stroke-width="0.8"><path d="M7 6 H13.4 M7 8.2 H13.4 M7 10.4 H13.4 M7 12.6 H13.4 M9 5 V14 M11.4 5 V14"/></g>
<rect x="0.8" y="4" width="5.6" height="8.2" fill="#23509a"/>
<path d="M1.7 6.2 L2.6 10 L3.6 7 L4.6 10 L5.5 6.2" fill="none" stroke="#fff" stroke-width="0.85"/></svg>
<span class="a t" style="transform:scaleX(1.0352);left:485.6px;top:228.48px;font-size:11px;color:#2c2c2c;line-height:16px;">aaaa20230807125536dogovor.docx</span>
<div class="a" style="left:871.3px;top:228.48px;width:33.7px;height:16px;overflow:hidden;"><span class="a t" style="transform:scaleX(0.9840);left:0;top:0;font-size:11px;color:#444;line-height:16px;">12,1 КБ</span></div>
<span class="a t" style="left:908.3px;top:228.48px;font-size:11px;color:#3b3b3b;line-height:16px;">11.09.2025 13:30</span>
<span class="a t" style="left:1089.8px;top:228.48px;font-size:11px;color:#3b3b3b;line-height:16px;">11.09.2025 13:30</span>
<div class="a" style="left:1271.3px;top:228.48px;width:30.7px;height:16px;overflow:hidden;"><span class="a t" style="transform:scaleX(0.9618);left:0;top:0;font-size:11px;color:#3b3b3b;line-height:16px;">30.12.2025</span></div>
<div class="a" style="left:1306.6px;top:228.12px;width:71.6px;height:15px;background:#2fbf7b;border:1px solid #239f63;box-sizing:border-box;border-radius:2px;"></div>
<span class="a t" style="transform:scaleX(1.0526);left:1315.8px;top:228.28px;font-size:11px;color:#fff;line-height:16px;">Договоры</span>
<svg class="a" style="left:408px;top:255.45px;" width="6" height="6" viewBox="0 0 6 6"><path d="M5.6 0 V5.6 H0 Z" fill="#5a5a5a"/></svg>
<div class="a" style="left:414px;top:255.95px;width:9px;height:1px;background:repeating-linear-gradient(to right,#c8c8c8 0,#c8c8c8 1px,transparent 1px,transparent 2px);"></div>
<svg class="a" style="left:424px;top:248.95px;" width="14" height="17" viewBox="0 0 14 17">
<rect x="0.7" y="0.8" width="11.8" height="15.2" rx="0.8" fill="#fff" stroke="#444" stroke-width="1.2"/>
<path d="M1.6 2.4 H11.6" stroke="#f0a04e" stroke-width="2.4" stroke-dasharray="1.4 0.7"/>
<circle cx="6.6" cy="9.8" r="3.7" fill="none" stroke="#777" stroke-width="1"/>
<circle cx="6.6" cy="9.8" r="1.3" fill="none" stroke="#777" stroke-width="0.9"/></svg>
<span class="a t" style="transform:scaleX(1.0952);left:444.1px;top:249.61px;font-size:11px;color:#2c2c2c;line-height:16px;">заголовок блога</span>
<span class="a t" style="left:770.8px;top:249.61px;font-size:11px;color:#444;line-height:16px;">0</span>
<span class="a t" style="left:834.3px;top:249.61px;font-size:11px;color:#444;line-height:16px;">4</span>
<div class="a" style="left:871.3px;top:249.61px;width:33.7px;height:16px;overflow:hidden;"><span class="a t" style="transform:scaleX(0.9840);left:0;top:0;font-size:11px;color:#444;line-height:16px;">24,7 КБ</span></div>
<div class="a" style="left:432px;top:278.58000000000004px;width:11px;height:1px;background:repeating-linear-gradient(to right,#c8c8c8 0,#c8c8c8 1px,transparent 1px,transparent 2px);"></div>
<svg class="a" style="left:444px;top:271.08000000000004px;" width="16" height="16" viewBox="0 0 16 16">
<path d="M3 0.6 H10.6 L14.6 4.4 V15 H3 Z" fill="#f3f3f3" stroke="#9b9b9b" stroke-width="1"/>
<path d="M10.4 0.6 V4.6 H14.6" fill="#fff" stroke="#9b9b9b" stroke-width="0.9"/>
<g stroke="#c4c4c4" stroke-width="0.8"><path d="M7 6 H13.4 M7 8.2 H13.4 M7 10.4 H13.4 M7 12.6 H13.4 M9 5 V14 M11.4 5 V14"/></g>
<rect x="0.8" y="4" width="5.6" height="8.2" fill="#23509a"/>
<path d="M1.7 6.2 L2.6 10 L3.6 7 L4.6 10 L5.5 6.2" fill="none" stroke="#fff" stroke-width="0.85"/></svg>
<span class="a t" style="transform:scaleX(1.0340);left:464.8px;top:270.74px;font-size:11px;color:#2c2c2c;line-height:16px;">aaaa20230220161418dogovor.docx</span>
<div class="a" style="left:871.3px;top:270.74px;width:33.7px;height:16px;overflow:hidden;"><span class="a t" style="transform:scaleX(0.9840);left:0;top:0;font-size:11px;color:#444;line-height:16px;">12,1 КБ</span></div>
<span class="a t" style="left:908.3px;top:270.74px;font-size:11px;color:#3b3b3b;line-height:16px;">11.09.2025 14:02</span>
<span class="a t" style="left:1089.8px;top:270.74px;font-size:11px;color:#3b3b3b;line-height:16px;">11.09.2025 14:02</span>
<div class="a" style="left:1271.3px;top:270.74px;width:30.7px;height:16px;overflow:hidden;"><span class="a t" style="transform:scaleX(0.9618);left:0;top:0;font-size:11px;color:#3b3b3b;line-height:16px;">30.12.2025</span></div>
<div class="a" style="left:1306.6px;top:270.38000000000005px;width:71.6px;height:15px;background:#2fbf7b;border:1px solid #239f63;box-sizing:border-box;border-radius:2px;"></div>
<span class="a t" style="transform:scaleX(1.0526);left:1315.8px;top:270.54px;font-size:11px;color:#fff;line-height:16px;">Договоры</span>
<div class="a" style="left:432px;top:299.71000000000004px;width:12px;height:1px;background:repeating-linear-gradient(to right,#c8c8c8 0,#c8c8c8 1px,transparent 1px,transparent 2px);"></div>
<svg class="a" style="left:446px;top:291.71000000000004px;" width="13" height="17" viewBox="0 0 13 17">
<path d="M0.7 0.7 H8 L11.8 4.5 V15.8 H0.7 Z" fill="#fff" stroke="#222" stroke-width="1.3" stroke-linejoin="round"/>
<path d="M7.8 0.7 V4.7 H11.8" fill="none" stroke="#222" stroke-width="1.1"/>
<rect x="2.4" y="6.4" width="7.8" height="8" fill="#d3eafa"/><g stroke="#3d9ad0" stroke-width="1"><path d="M2.6 7.2 H10 M2.6 9.3 H10 M2.6 11.4 H10 M2.6 13.5 H10"/></g></svg>
<span class="a t" style="transform:scaleX(1.0341);left:464.8px;top:291.87px;font-size:11px;color:#2c2c2c;line-height:16px;">aaaa20230220161418dogovor.txt</span>
<div class="a" style="left:871.3px;top:291.87px;width:33.7px;height:16px;overflow:hidden;"><span class="a t" style="transform:scaleX(1.0090);left:0;top:0;font-size:11px;color:#444;line-height:16px;">485 B</span></div>
<span class="a t" style="left:908.3px;top:291.87px;font-size:11px;color:#3b3b3b;line-height:16px;">11.09.2025 14:02</span>
<span class="a t" style="left:1089.8px;top:291.87px;font-size:11px;color:#3b3b3b;line-height:16px;">11.09.2025 14:02</span>
<div class="a" style="left:1271.3px;top:291.87px;width:30.7px;height:16px;overflow:hidden;"><span class="a t" style="transform:scaleX(0.9618);left:0;top:0;font-size:11px;color:#3b3b3b;line-height:16px;">30.12.2025</span></div>
<div class="a" style="left:1306.6px;top:291.51000000000005px;width:71.6px;height:15px;background:#2fbf7b;border:1px solid #239f63;box-sizing:border-box;border-radius:2px;"></div>
<span class="a t" style="transform:scaleX(1.0526);left:1315.8px;top:291.67px;font-size:11px;color:#fff;line-height:16px;">Договоры</span>
<div class="a" style="left:432px;top:320.84000000000003px;width:11px;height:1px;background:repeating-linear-gradient(to right,#c8c8c8 0,#c8c8c8 1px,transparent 1px,transparent 2px);"></div>
<svg class="a" style="left:444px;top:313.34000000000003px;" width="16" height="16" viewBox="0 0 16 16">
<path d="M3 0.6 H10.6 L14.6 4.4 V15 H3 Z" fill="#f3f3f3" stroke="#9b9b9b" stroke-width="1"/>
<path d="M10.4 0.6 V4.6 H14.6" fill="#fff" stroke="#9b9b9b" stroke-width="0.9"/>
<g stroke="#c4c4c4" stroke-width="0.8"><path d="M7 6 H13.4 M7 8.2 H13.4 M7 10.4 H13.4 M7 12.6 H13.4 M9 5 V14 M11.4 5 V14"/></g>
<rect x="0.8" y="4" width="5.6" height="8.2" fill="#23509a"/>
<path d="M1.7 6.2 L2.6 10 L3.6 7 L4.6 10 L5.5 6.2" fill="none" stroke="#fff" stroke-width="0.85"/></svg>
<span class="a t" style="transform:scaleX(1.0236);left:464.8px;top:313.00px;font-size:11px;color:#222;line-height:16px;">aaaa20230220161418fin.docx</span>
<div class="a" style="left:871.3px;top:313.00px;width:33.7px;height:16px;overflow:hidden;"><span class="a t" style="transform:scaleX(1.0612);left:0;top:0;font-size:11px;color:#444;line-height:16px;">11,91 КБ</span></div>
<span class="a t" style="left:908.3px;top:313.00px;font-size:11px;color:#3b3b3b;line-height:16px;">11.09.2025 14:02</span>
<span class="a t" style="left:1089.8px;top:313.00px;font-size:11px;color:#3b3b3b;line-height:16px;">11.09.2025 14:02</span>
<div class="a" style="left:1271.3px;top:313.00px;width:30.7px;height:16px;overflow:hidden;"><span class="a t" style="transform:scaleX(0.9618);left:0;top:0;font-size:11px;color:#3b3b3b;line-height:16px;">30.12.2025</span></div>
<div class="a" style="left:1306.6px;top:312.64000000000004px;width:71.6px;height:15px;background:#609f8c;border:1px solid #4f8a78;box-sizing:border-box;border-radius:2px;"></div>
<span class="a t" style="transform:scaleX(1.0228);left:1308.3px;top:312.80px;font-size:11px;color:#fff;line-height:16px;">Финансова...</span>
<div class="a" style="left:432px;top:341.97px;width:12px;height:1px;background:repeating-linear-gradient(to right,#c8c8c8 0,#c8c8c8 1px,transparent 1px,transparent 2px);"></div>
<svg class="a" style="left:446px;top:333.97px;" width="13" height="17" viewBox="0 0 13 17">
<path d="M0.7 0.7 H8 L11.8 4.5 V15.8 H0.7 Z" fill="#fff" stroke="#222" stroke-width="1.3" stroke-linejoin="round"/>
<path d="M7.8 0.7 V4.7 H11.8" fill="none" stroke="#222" stroke-width="1.1"/>
<rect x="2.4" y="6.4" width="7.8" height="8" fill="#d3eafa"/><g stroke="#3d9ad0" stroke-width="1"><path d="M2.6 7.2 H10 M2.6 9.3 H10 M2.6 11.4 H10 M2.6 13.5 H10"/></g></svg>
<span class="a t" style="transform:scaleX(1.0302);left:464.8px;top:334.13px;font-size:11px;color:#555;line-height:16px;">aaaa20230220161418fin.txt</span>
<div class="a" style="left:871.3px;top:334.13px;width:33.7px;height:16px;overflow:hidden;"><span class="a t" style="transform:scaleX(1.0090);left:0;top:0;font-size:11px;color:#444;line-height:16px;">232 B</span></div>
<span class="a t" style="left:908.3px;top:334.13px;font-size:11px;color:#3b3b3b;line-height:16px;">11.09.2025 14:02</span>
<span class="a t" style="left:1089.8px;top:334.13px;font-size:11px;color:#3b3b3b;line-height:16px;">11.09.2025 14:02</span>
<div class="a" style="left:1271.3px;top:334.13px;width:30.7px;height:16px;overflow:hidden;"><span class="a t" style="transform:scaleX(0.9618);left:0;top:0;font-size:11px;color:#3b3b3b;line-height:16px;">30.12.2025</span></div>
<div class="a" style="left:1306.6px;top:333.77000000000004px;width:71.6px;height:15px;background:#609f8c;border:1px solid #4f8a78;box-sizing:border-box;border-radius:2px;"></div>
<span class="a t" style="transform:scaleX(1.0228);left:1308.3px;top:333.93px;font-size:11px;color:#fff;line-height:16px;">Финансова...</span>
<svg class="a" style="left:387px;top:361.1px;" width="6" height="6" viewBox="0 0 6 6"><path d="M5.6 0 V5.6 H0 Z" fill="#5a5a5a"/></svg>
<div class="a" style="left:393px;top:361.6px;width:7px;height:1px;background:repeating-linear-gradient(to right,#c8c8c8 0,#c8c8c8 1px,transparent 1px,transparent 2px);"></div>
<svg class="a" style="left:401px;top:354.1px;" width="18" height="17" viewBox="0 0 18 17">
<rect x="10.4" y="0.7" width="6.4" height="15.4" rx="1.2" fill="#fff" stroke="#7b7b7b" stroke-width="1.1"/>
<path d="M13 3 V8" stroke="#9a9a9a" stroke-width="1"/><rect x="12.6" y="11" width="1.8" height="2" fill="#2c8fe0"/>
<rect x="0.7" y="5.4" width="11" height="8.6" rx="1" fill="#fff" stroke="#6b6b6b" stroke-width="1.2"/>
<path d="M3.4 15.8 H9" stroke="#9a9a9a" stroke-width="1.3"/></svg>
<div class="a" style="left:422px;top:359.5px;width:110px;height:11.2px;background:#ececee;filter:blur(0.6px);"></div>
<div class="a" style="left:442px;top:358px;width:19px;height:12.8px;background:#f0f17c;"></div>
<div class="a" style="left:425px;top:360.6px;width:13px;height:6px;background:#bcbcc1;filter:blur(2px);border-radius:3px;"></div>
<div class="a" style="left:464px;top:360.6px;width:16px;height:6px;background:#bfbfc4;filter:blur(2px);border-radius:3px;"></div>
<div class="a" style="left:486px;top:360.6px;width:42px;height:6px;background:#bcbcc1;filter:blur(2px);border-radius:3px;"></div>
<span class="a t" style="transform:scaleX(1.0205);left:440.9px;top:355.26px;font-size:11px;color:#66662a;line-height:16px;">-jira</span>
<span class="a t" style="left:708.3px;top:355.26px;font-size:11px;color:#444;line-height:16px;">1</span>
<span class="a t" style="left:770.8px;top:355.26px;font-size:11px;color:#444;line-height:16px;">2</span>
<span class="a t" style="left:834.3px;top:355.26px;font-size:11px;color:#444;line-height:16px;">4</span>
<div class="a" style="left:871.3px;top:355.26px;width:33.7px;height:16px;overflow:hidden;"><span class="a t" style="transform:scaleX(1.0412);left:0;top:0;font-size:11px;color:#444;line-height:16px;">24,48 КБ</span></div>
<svg class="a" style="left:408px;top:382.23px;" width="6" height="6" viewBox="0 0 6 6"><path d="M5.6 0 V5.6 H0 Z" fill="#5a5a5a"/></svg>
<div class="a" style="left:414px;top:382.73px;width:9px;height:1px;background:repeating-linear-gradient(to right,#c8c8c8 0,#c8c8c8 1px,transparent 1px,transparent 2px);"></div>
<svg class="a" style="left:424px;top:375.73px;" width="14" height="17" viewBox="0 0 14 17">
<rect x="0.7" y="0.8" width="11.8" height="15.2" rx="0.8" fill="#fff" stroke="#444" stroke-width="1.2"/>
<path d="M1.6 2.4 H11.6" stroke="#f0a04e" stroke-width="2.4" stroke-dasharray="1.4 0.7"/>
<circle cx="6.6" cy="9.8" r="3.7" fill="none" stroke="#777" stroke-width="1"/>
<circle cx="6.6" cy="9.8" r="1.3" fill="none" stroke="#777" stroke-width="0.9"/></svg>
<span class="a t" style="transform:scaleX(0.9201);left:444.1px;top:377.39px;font-size:11px;color:#2c2c2c;line-height:16px;">sam</span>
<span class="a t" style="left:770.8px;top:376.39px;font-size:11px;color:#444;line-height:16px;">1</span>
<span class="a t" style="left:834.3px;top:376.39px;font-size:11px;color:#444;line-height:16px;">4</span>
<div class="a" style="left:871.3px;top:376.39px;width:33.7px;height:16px;overflow:hidden;"><span class="a t" style="transform:scaleX(1.0412);left:0;top:0;font-size:11px;color:#444;line-height:16px;">24,48 КБ</span></div>
<svg class="a" style="left:429px;top:403.36px;" width="6" height="6" viewBox="0 0 6 6"><path d="M5.6 0 V5.6 H0 Z" fill="#5a5a5a"/></svg>
<div class="a" style="left:435px;top:403.86px;width:8px;height:1px;background:repeating-linear-gradient(to right,#c8c8c8 0,#c8c8c8 1px,transparent 1px,transparent 2px);"></div>
<svg class="a" style="left:444px;top:398.36px;" width="16" height="15" viewBox="0 0 16 15">
<path d="M1.4 13.4 V1.6 Q1.4 0.8 2.2 0.8 H6 L7.4 2.4 H13.6 Q14.4 2.4 14.4 3.2 V5" fill="#fff" stroke="#e79a4b" stroke-width="1.1"/>
<path d="M0.7 4.8 H15 L14.4 13.8 H1.3 Z" fill="#fbd49c" stroke="#e79a4b" stroke-width="1.1" stroke-linejoin="round"/></svg>
<span class="a t" style="transform:scaleX(0.9539);left:465.1px;top:397.52px;font-size:11px;color:#2c2c2c;line-height:16px;">sam-7</span>
<span class="a t" style="left:770.8px;top:397.52px;font-size:11px;color:#444;line-height:16px;">0</span>
<span class="a t" style="left:834.3px;top:397.52px;font-size:11px;color:#444;line-height:16px;">4</span>
<div class="a" style="left:871.3px;top:397.52px;width:33.7px;height:16px;overflow:hidden;"><span class="a t" style="transform:scaleX(1.0412);left:0;top:0;font-size:11px;color:#444;line-height:16px;">24,48 КБ</span></div>
<div class="a" style="left:453px;top:426.49px;width:11px;height:1px;background:repeating-linear-gradient(to right,#c8c8c8 0,#c8c8c8 1px,transparent 1px,transparent 2px);"></div>
<svg class="a" style="left:465px;top:418.99px;" width="16" height="16" viewBox="0 0 16 16">
<path d="M3 0.6 H10.6 L14.6 4.4 V15 H3 Z" fill="#f3f3f3" stroke="#9b9b9b" stroke-width="1"/>
<path d="M10.4 0.6 V4.6 H14.6" fill="#fff" stroke="#9b9b9b" stroke-width="0.9"/>
<g stroke="#c4c4c4" stroke-width="0.8"><path d="M7 6 H13.4 M7 8.2 H13.4 M7 10.4 H13.4 M7 12.6 H13.4 M9 5 V14 M11.4 5 V14"/></g>
<rect x="0.8" y="4" width="5.6" height="8.2" fill="#23509a"/>
<path d="M1.7 6.2 L2.6 10 L3.6 7 L4.6 10 L5.5 6.2" fill="none" stroke="#fff" stroke-width="0.85"/></svg>
<span class="a t" style="transform:scaleX(1.0450);left:485.6px;top:418.65px;font-size:11px;color:#2c2c2c;line-height:16px;">aaaa20230911122358dogovor.docx</span>
<div class="a" style="left:871.3px;top:418.65px;width:33.7px;height:16px;overflow:hidden;"><span class="a t" style="transform:scaleX(1.0412);left:0;top:0;font-size:11px;color:#444;line-height:16px;">12,01 КБ</span></div>
<span class="a t" style="left:908.3px;top:418.65px;font-size:11px;color:#3b3b3b;line-height:16px;">11.09.2025 14:05</span>
<span class="a t" style="left:1089.8px;top:418.65px;font-size:11px;color:#3b3b3b;line-height:16px;">11.09.2025 14:05</span>
<div class="a" style="left:1271.3px;top:418.65px;width:30.7px;height:16px;overflow:hidden;"><span class="a t" style="transform:scaleX(0.9618);left:0;top:0;font-size:11px;color:#3b3b3b;line-height:16px;">30.12.2025</span></div>
<div class="a" style="left:1306.6px;top:418.29px;width:71.6px;height:15px;background:#2fbf7b;border:1px solid #239f63;box-sizing:border-box;border-radius:2px;"></div>
<span class="a t" style="transform:scaleX(1.0526);left:1315.8px;top:418.45px;font-size:11px;color:#fff;line-height:16px;">Договоры</span>
<div class="a" style="left:453px;top:447.62px;width:13px;height:1px;background:repeating-linear-gradient(to right,#c8c8c8 0,#c8c8c8 1px,transparent 1px,transparent 2px);"></div>
<svg class="a" style="left:467px;top:439.62px;" width="13" height="17" viewBox="0 0 13 17">
<path d="M0.7 0.7 H8 L11.8 4.5 V15.8 H0.7 Z" fill="#fff" stroke="#222" stroke-width="1.3" stroke-linejoin="round"/>
<path d="M7.8 0.7 V4.7 H11.8" fill="none" stroke="#222" stroke-width="1.1"/>
<rect x="2.4" y="6.4" width="7.8" height="8" fill="#d3eafa"/><g stroke="#3d9ad0" stroke-width="1"><path d="M2.6 7.2 H10 M2.6 9.3 H10 M2.6 11.4 H10 M2.6 13.5 H10"/></g></svg>
<span class="a t" style="transform:scaleX(1.0477);left:486.1px;top:439.78px;font-size:11px;color:#2c2c2c;line-height:16px;">aaaa20230911122358dogovor.txt</span>
<div class="a" style="left:871.3px;top:439.78px;width:33.7px;height:16px;overflow:hidden;"><span class="a t" style="transform:scaleX(1.0090);left:0;top:0;font-size:11px;color:#444;line-height:16px;">402 B</span></div>
<span class="a t" style="left:908.3px;top:439.78px;font-size:11px;color:#3b3b3b;line-height:16px;">11.09.2025 14:05</span>
<span class="a t" style="left:1089.8px;top:439.78px;font-size:11px;color:#3b3b3b;line-height:16px;">11.09.2025 14:05</span>
<div class="a" style="left:1271.3px;top:439.78px;width:30.7px;height:16px;overflow:hidden;"><span class="a t" style="transform:scaleX(0.9618);left:0;top:0;font-size:11px;color:#3b3b3b;line-height:16px;">30.12.2025</span></div>
<div class="a" style="left:1306.6px;top:439.42px;width:71.6px;height:15px;background:#2fbf7b;border:1px solid #239f63;box-sizing:border-box;border-radius:2px;"></div>
<span class="a t" style="transform:scaleX(1.0526);left:1315.8px;top:439.58px;font-size:11px;color:#fff;line-height:16px;">Договоры</span>
<svg class="a" style="left:584.5px;top:320.5px;" width="21" height="33" viewBox="0 0 21 33">
<path d="M1 1 V26.5 L7 21 L11.4 31 L15.4 29.2 L11 19.6 H19.2 Z" fill="#fff" stroke="#111" stroke-width="1.7" stroke-linejoin="round"/></svg>
<div class="a" style="left:1439px;top:93px;width:481px;height:373px;background:#fff;"></div>
<div class="a" style="left:1439px;top:93px;width:481px;height:22px;background:#fbfafd;"></div>
<svg class="a" style="left:1449px;top:97.6px;" width="16" height="13" viewBox="0 0 16 13">
<g fill="#2e2e2e"><rect x="0.2" y="0.5" width="2" height="1.8"/><rect x="0.2" y="3.9" width="2" height="1.8"/><rect x="0.2" y="7.3" width="2" height="1.8"/><rect x="0.2" y="10.7" width="2" height="1.8"/></g>
<g stroke="#2e2e2e" stroke-width="1.2"><path d="M3.6 1.4 H15.2 M3.6 4.8 H15.2 M3.6 8.2 H15.2 M3.6 11.6 H15.2"/></g></svg>
<span class="a t" style="transform:scaleX(1.1055);left:1468.8px;top:96.16px;font-size:11px;color:#333;line-height:16px;">Журнал событий</span>
<div class="a" style="left:1444px;top:122px;width:480px;height:19px;background:#fff;border:1px solid #a8a7aa;box-sizing:border-box;"></div>
<div class="a" style="left:1455px;top:123px;width:1px;height:17px;background:#b5b4b7;"></div>
<div class="a" style="left:1505px;top:123px;width:1px;height:17px;background:#b5b4b7;"></div>
<div class="a" style="left:1617px;top:123px;width:1px;height:17px;background:#b5b4b7;"></div>
<div class="a" style="left:1706px;top:123px;width:1px;height:17px;background:#b5b4b7;"></div>
<div class="a" style="left:1774px;top:123px;width:1px;height:17px;background:#b5b4b7;"></div>
<svg class="a" style="left:1446px;top:127.5px;" width="8" height="8" viewBox="0 0 8 8"><g stroke="#777" stroke-width="0.9"><path d="M4 0.3 V7.7 M0.3 4 H7.7 M1.3 1.3 L6.7 6.7 M6.7 1.3 L1.3 6.7"/></g></svg>
<div class="a" style="left:1457.3px;top:124.16px;width:46.2px;height:16px;overflow:hidden;"><span class="a t" style="transform:scaleX(1.0323);left:0;top:0;font-size:11px;color:#3a3a3a;line-height:16px;">Тип файла</span></div>
<span class="a t" style="transform:scaleX(1.0898);left:1508.3px;top:124.16px;font-size:11px;color:#3a3a3a;line-height:16px;">Операции</span>
<div class="a" style="left:1619.8px;top:124.16px;width:66.7px;height:16px;overflow:hidden;"><span class="a t" style="transform:scaleX(1.1005);left:0;top:0;font-size:11px;color:#3a3a3a;line-height:16px;">Дата события</span></div>
<svg class="a" style="left:1691px;top:130px;" width="10" height="5" viewBox="0 0 10 5"><path d="M0 0 H9.4 L4.7 4.6 Z" fill="#777"/></svg>
<div class="a" style="left:1708.8px;top:124.16px;width:63.7px;height:16px;overflow:hidden;"><span class="a t" style="transform:scaleX(1.1288);left:0;top:0;font-size:11px;color:#3a3a3a;line-height:16px;">Метки ручной</span></div>
<div class="a" style="left:1776.3px;top:124.16px;width:143.7px;height:16px;overflow:hidden;"><span class="a t" style="transform:scaleX(1.1081);left:0;top:0;font-size:11px;color:#3a3a3a;line-height:16px;">Метки автоматической классификации</span></div>
<div class="a" style="left:1444px;top:141px;width:12px;height:20px;background:#fff;border:1px solid #b9b8bb;box-sizing:border-box;border-top:none;"></div>
<div class="a" style="left:1456px;top:160px;width:50px;height:1px;background:#cfced1;"></div>
<div class="a" style="left:1506px;top:141px;width:414px;height:19px;background:#d5e8f8;"></div>
<div class="a" style="left:1506px;top:160px;width:414px;height:1px;background:#c3d4e4;"></div>
<div class="a" style="left:1617px;top:141px;width:1px;height:19px;background:#c6d9ea;"></div>
<div class="a" style="left:1706px;top:141px;width:1px;height:19px;background:#c6d9ea;"></div>
<div class="a" style="left:1774px;top:141px;width:1px;height:19px;background:#c6d9ea;"></div>
<div class="a" style="left:1505px;top:141px;width:1px;height:19px;background:#dddce0;"></div>
<svg class="a" style="left:1447.5px;top:146.5px;" width="5" height="9" viewBox="0 0 5 9"><path d="M0.4 0.8 L4.2 4.3 L0.4 7.8 Z" fill="#3a3a3a"/></svg>
<svg class="a" style="left:1475px;top:142px;" width="13" height="17" viewBox="0 0 13 17">
<path d="M0.7 0.7 H7.8 L11.6 4.5 V15.6 H0.7 Z" fill="#fbfbfd" stroke="#9c9c9c" stroke-width="1.1"/>
<path d="M7.6 0.7 V4.7 H11.6" fill="none" stroke="#9c9c9c" stroke-width="1"/></svg>
<svg class="a" style="left:1509.5px;top:142px;" width="17" height="18" viewBox="0 0 17 18">
<path d="M0.8 14.6 V0.8 H7 L10.8 4.6 V7" fill="#fff" stroke="#555" stroke-width="1.2"/>
<path d="M6.8 0.8 V4.8 H10.8" fill="none" stroke="#555" stroke-width="1"/><path d="M0.8 14.6 H6" stroke="#555" stroke-width="1.2"/>
<circle cx="11.6" cy="12.2" r="4.2" fill="#fff" stroke="#e04a4a" stroke-width="1.2"/>
<path d="M11.6 9.8 V12.8" stroke="#e04a4a" stroke-width="1.3"/><circle cx="11.6" cy="14.4" r="0.8" fill="#e04a4a"/></svg>
<div class="a" style="left:1529.3px;top:142.36px;width:86.7px;height:16px;overflow:hidden;"><span class="a t" style="transform:scaleX(1.0657);left:0;top:0;font-size:11px;color:#1e1e1e;line-height:16px;">Получение метки</span></div>
<div class="a" style="left:1619.3px;top:142.36px;width:85.7px;height:16px;overflow:hidden;"><span class="a t" style="transform:scaleX(0.9924);left:0;top:0;font-size:11px;color:#333;line-height:16px;">01.12.2025 14:46</span></div>
<div class="a" style="left:1775px;top:144px;width:143px;height:13.2px;background:#5e9f8b;border:1px solid #518c79;box-sizing:border-box;border-radius:2px;"></div>
<span class="a t" style="transform:scaleX(1.0311);left:1783.3px;top:142.36px;font-size:11px;color:#fff;line-height:16px;">Финансовая отчетность</span>
<div class="a" style="left:373px;top:466px;width:1547px;height:117px;background:#fff;"></div>
<div class="a" style="left:373px;top:465.3px;width:1547px;height:1.7px;background:#c6c5c9;"></div>
<div class="a" style="left:1144.5px;top:465px;width:11px;height:2.2px;background:#fff;"></div>
<div class="a" style="left:1146.2px;top:465.6px;width:1.4px;height:1.3px;background:#b9b8bc;"></div>
<div class="a" style="left:1149.3px;top:465.6px;width:1.4px;height:1.3px;background:#b9b8bc;"></div>
<div class="a" style="left:1152.4px;top:465.6px;width:1.4px;height:1.3px;background:#b9b8bc;"></div>
<div class="a" style="left:373px;top:467px;width:1547px;height:21px;background:#fbfafd;"></div>
<svg class="a" style="left:383px;top:470px;" width="17" height="17" viewBox="0 0 17 17">
<circle cx="10" cy="6.6" r="5.7" fill="#fff" stroke="#333" stroke-width="1.3"/>
<path d="M5.8 10.8 L0.9 15.8" stroke="#333" stroke-width="2"/>
<path d="M6.2 6.8 C8 4.2 12 4.2 13.8 6.8" fill="none" stroke="#333" stroke-width="1"/>
<circle cx="10" cy="7" r="1.9" fill="#333"/></svg>
<span class="a t" style="transform:scaleX(1.0895);left:403.8px;top:470.16px;font-size:11px;color:#333;line-height:16px;">Только текст</span>
<div class="a" style="left:380.5px;top:498px;width:1538px;height:90px;background:#fff;border:1px solid #d3d2d5;box-sizing:border-box;"></div>
<svg class="a" style="left:389px;top:503px;" width="17" height="15" viewBox="0 0 17 15">
<g fill="#fff" stroke="#7c7c7c" stroke-width="1"><rect x="0.6" y="0.6" width="8.8" height="3.2"/><rect x="0.6" y="5.6" width="6.6" height="3.2"/><rect x="0.6" y="10.6" width="7" height="3.6"/></g>
<path d="M10.6 2.2 H13.6 Q15.8 2.2 15.8 4.6 V5.4 Q15.8 7.8 13.6 7.8 H9.6 M11.6 5.6 L9.4 7.8 L11.6 10" fill="none" stroke="#5b8fd0" stroke-width="1.1"/></svg>
<span class="a t" style="transform:scaleX(1.0910);left:409.3px;top:502.36px;font-size:11px;color:#333;line-height:16px;">Переносить текст по словам</span>
<div class="a" style="left:576px;top:500px;width:1px;height:20px;background:#c9c8cb;"></div>
<div class="a" style="left:580px;top:499px;width:23px;height:22px;background:#a9cdf2;"></div>
<svg class="a" style="left:582.5px;top:502px;" width="18" height="16" viewBox="0 0 18 16">
<path d="M3.6 6 V0.7 H11 L14.2 3.8 V6" fill="#fff" stroke="#333" stroke-width="1.2"/>
<path d="M10.8 0.7 V4 H14.2" fill="none" stroke="#333" stroke-width="1"/>
<path d="M3.6 12 V15.4 H14.2 V12" fill="#fff" stroke="#333" stroke-width="1.2"/>
<rect x="0.8" y="6.4" width="16.2" height="5.6" rx="1.4" fill="#f6c1c5" stroke="#d8343f" stroke-width="1.2"/>
<path d="M3.6 9.2 H14.2" stroke="#d8343f" stroke-width="1.1"/></svg>
<svg class="a" style="left:616px;top:502px;" width="17" height="17" viewBox="0 0 17 17">
<circle cx="8" cy="8" r="7.3" fill="none" stroke="#bdbdbd" stroke-width="1.1"/>
<path d="M12 8 H4.4 M7.4 4.8 L4.2 8 L7.4 11.2" fill="none" stroke="#bdbdbd" stroke-width="1.1"/></svg>
<div class="a" style="left:640px;top:500px;width:1px;height:20px;background:#c9c8cb;"></div>
<span class="a t" style="left:672.9px;top:502.36px;font-size:11px;color:#333;line-height:16px;">1</span>
<span class="a t" style="transform:scaleX(1.0735);left:686.0px;top:502.36px;font-size:11px;color:#333;line-height:16px;">из 9</span>
<div class="a" style="left:738px;top:500px;width:1px;height:20px;background:#c9c8cb;"></div>
<svg class="a" style="left:744.5px;top:502px;" width="17" height="17" viewBox="0 0 17 17">
<circle cx="8" cy="8" r="7.3" fill="none" stroke="#4f93d8" stroke-width="1.1"/>
<path d="M4 8 H11.6 M8.6 4.8 L11.8 8 L8.6 11.2" fill="none" stroke="#4f93d8" stroke-width="1.1"/></svg>
<span class="a t" style="transform:scaleX(1.1030);left:1743.3px;top:502.36px;font-size:11px;color:#333;line-height:16px;">Искать:</span>
<div class="a" style="left:1789px;top:499px;width:101px;height:22px;background:#fff;border:1px solid #ababab;box-sizing:border-box;"></div>
<svg class="a" style="left:1893px;top:501.5px;" width="17" height="17" viewBox="0 0 17 17">
<circle cx="8" cy="8" r="7.3" fill="none" stroke="#4f93d8" stroke-width="1.1"/>
<path d="M4 8 H11.6 M8.6 4.8 L11.8 8 L8.6 11.2" fill="none" stroke="#4f93d8" stroke-width="1.1"/></svg>
<div class="a" style="left:389px;top:524px;width:1522px;height:1px;background:#d3d2d5;"></div>
<span class="a t" style="left:392.00px;top:532.61px;font-family:'Liberation Mono', monospace;font-size:13.473px;line-height:16px;color:#484848;">test20230220161418</span>
<div class="a" style="left:391.3px;top:547.4px;width:73.16px;height:15.8px;background:#8fc0f3;"></div>
<span class="a t" style="left:392.00px;top:548.71px;font-family:'Liberation Mono', monospace;font-size:13.473px;line-height:16px;color:#484848;">Полугодие</span>
<div class="a" style="left:472.14px;top:547.4px;width:48.9px;height:15.8px;background:#f9b06b;"></div>
<span class="a t" style="left:472.84px;top:548.71px;font-family:'Liberation Mono', monospace;font-size:13.473px;line-height:16px;color:#484848;">Кредит</span>
<div class="a" style="left:528.73px;top:547.4px;width:56.99px;height:15.8px;background:#f9b06b;"></div>
<span class="a t" style="left:529.43px;top:548.71px;font-family:'Liberation Mono', monospace;font-size:13.473px;line-height:16px;color:#484848;">Затраты</span>
<div class="a" style="left:593.4px;top:547.4px;width:81.24px;height:15.8px;background:#f9b06b;"></div>
<span class="a t" style="left:594.10px;top:548.71px;font-family:'Liberation Mono', monospace;font-size:13.473px;line-height:16px;color:#484848;">Показатели</span>
<div class="a" style="left:682.32px;top:547.4px;width:73.16px;height:15.8px;background:#f9b06b;"></div>
<span class="a t" style="left:683.02px;top:548.71px;font-family:'Liberation Mono', monospace;font-size:13.473px;line-height:16px;color:#484848;">Авансовый</span>
<div class="a" style="left:763.16px;top:547.4px;width:81.24px;height:15.8px;background:#f9b06b;"></div>
<span class="a t" style="left:763.86px;top:548.71px;font-family:'Liberation Mono', monospace;font-size:13.473px;line-height:16px;color:#484848;">Финансовый</span>
<div class="a" style="left:852.09px;top:547.4px;width:24.65px;height:15.8px;background:#f9b06b;"></div>
<span class="a t" style="left:852.79px;top:548.71px;font-family:'Liberation Mono', monospace;font-size:13.473px;line-height:16px;color:#484848;">Код</span>
<span class="a t" style="left:885.12px;top:548.71px;font-family:'Liberation Mono', monospace;font-size:13.473px;line-height:16px;color:#484848;">Бизнес-план</span>
<div class="a" style="left:981.43px;top:547.4px;width:81.24px;height:15.8px;background:#f9b06b;"></div>
<span class="a t" style="left:982.13px;top:548.71px;font-family:'Liberation Mono', monospace;font-size:13.473px;line-height:16px;color:#484848;">Реализация</span>
<div class="a" style="left:1070.36px;top:547.4px;width:170.16px;height:15.8px;background:#f9b06b;"></div>
<span class="a t" style="left:1071.06px;top:548.71px;font-family:'Liberation Mono', monospace;font-size:13.473px;line-height:16px;color:#484848;">Конкурентоспособность</span>
<span class="a t" style="left:1256.99px;top:548.71px;font-family:'Liberation Mono', monospace;font-size:13.473px;line-height:16px;color:#484848;">9730250387</span>
</body></html>
